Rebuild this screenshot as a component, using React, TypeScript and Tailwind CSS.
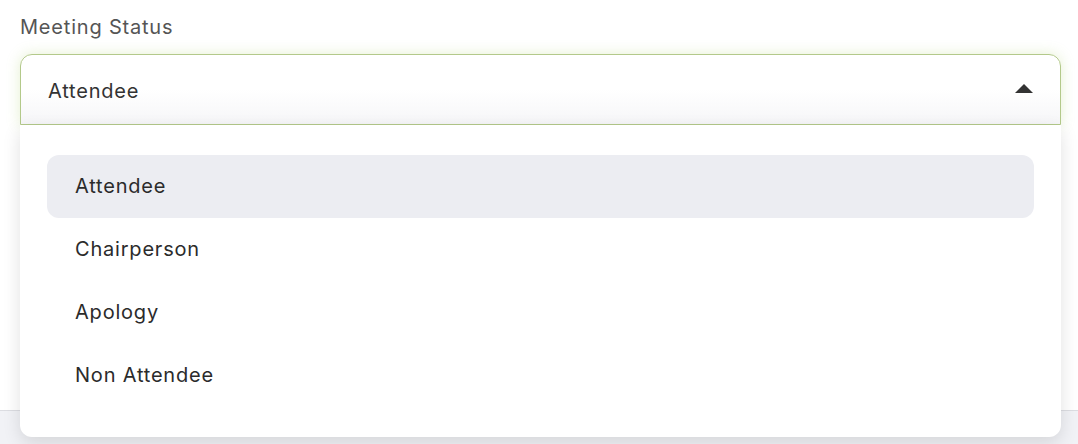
import React, { useState } from 'react'

const options = ['Attendee', 'Chairperson', 'Apology', 'Non Attendee']

export default function App() {
  const [selected, setSelected] = useState('Attendee')

  return (
    <div
      className="flex h-[444px] w-full flex-col bg-white tracking-[0.05em] text-[#333]"
      style={{ fontFamily: 'Inter, "Open Sans", sans-serif' }}
    >
      {/* Form body */}
      <div className="flex-1 pl-5 pr-[17px] pt-[13px]">
        <label className="block text-[20px] leading-[28px] text-[#555]">Meeting Status</label>

        <div className="relative mt-[13px]">
          {/* Trigger */}
          <button className="flex h-[71px] w-full items-center justify-between rounded-t-[12px] border border-[#b3c98a] bg-gradient-to-b from-white via-white to-[#f6f6f8] pl-[27px] pr-[27px] pt-[2px] text-left shadow-[0_0_14px_rgba(160,200,90,0.28)]">
            <span className="text-[20px] text-[#333]">{selected}</span>
            <svg width="18" height="9" viewBox="0 0 18 9" className="mt-[-5px]">
              <path d="M0 9 L9 0 L18 9 Z" fill="#333" />
            </svg>
          </button>

          {/* Options menu */}
          <div className="absolute left-0 right-0 top-[71px] z-10 rounded-b-[12px] bg-white px-[27px] py-[30px] shadow-[0_6px_18px_rgba(0,0,0,0.12)]">
            {options.map((opt) => (
              <div
                key={opt}
                onClick={() => setSelected(opt)}
                className={`flex h-[63px] cursor-pointer items-center rounded-[12px] pl-[28px] pr-[27px] pb-[2px] text-[20px] text-[#2b2b2b] ${
                  opt === selected ? 'bg-[#ecedf2]' : ''
                }`}
              >
                {opt}
              </div>
            ))}
          </div>
        </div>
      </div>

      {/* Footer strip */}
      <div className="h-[34px] border-t border-[#dcdde2] bg-[#f1f2f6]" />
    </div>
  )
}
